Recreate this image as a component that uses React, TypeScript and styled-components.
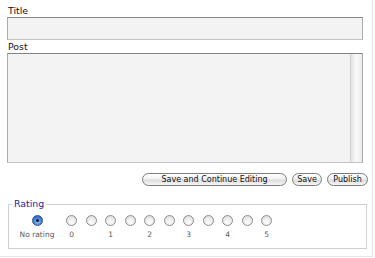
import { createGlobalStyle } from "styled-components";
import styled from "styled-components";

const GlobalStyle = createGlobalStyle`
  body {
    margin: 0;
    background: #ffffff;
    font-family: "DejaVu Sans", "Liberation Sans", sans-serif;
  }
`;

const Frame = styled.div`
  width: 373px;
  height: 257px;
  box-sizing: border-box;
  padding: 4px 4px 0 7px;
  border-right: 1px solid #e6e6e6;
  border-bottom: 1px solid #e6e6e6;
`;

const FieldLabel = styled.label`
  display: block;
  font-size: 9.4px;
  line-height: 13px;
  color: #111;
  padding-left: 1px;
`;

const TextInput = styled.input`
  display: block;
  width: 356px;
  height: 23px;
  margin: 0;
  box-sizing: border-box;
  border: 1px solid #ababab;
  border-top-color: #858585;
  border-bottom-color: #c4c4c4;
  background: #f3f3f3;
  outline: none;
`;

const PostBox = styled.div`
  display: flex;
  width: 356px;
  height: 110px;
  box-sizing: border-box;
  border: 1px solid #ababab;
  border-top-color: #858585;
  border-bottom-color: #c4c4c4;
  background: #f3f3f3;
`;

const PostArea = styled.textarea`
  flex: 1;
  border: 0;
  margin: 0;
  padding: 2px;
  background: transparent;
  resize: none;
  outline: none;
`;

const ScrollTrack = styled.div`
  width: 11px;
  border-left: 1px solid #d2d2d2;
  background: linear-gradient(to right, #e2e2e2, #f9f9f9 45%, #f2f2f2 80%, #e8e8e8);
`;

const Actions = styled.div`
  display: flex;
  justify-content: flex-end;
  gap: 5px;
  margin-top: 10px;
`;

const PillButton = styled.button<{ $width: number }>`
  width: ${({ $width }) => $width}px;
  height: 13px;
  padding: 0;
  box-sizing: border-box;
  border: 1px solid #7c7c7c;
  border-radius: 7px;
  background: linear-gradient(#ffffff, #f1f1f1 45%, #dcdcdc 55%, #f6f6f6);
  font-family: "DejaVu Sans", sans-serif;
  font-size: 8px;
  line-height: 11px;
  color: #111;
  cursor: pointer;
`;

const RatingSet = styled.fieldset`
  width: 359px;
  margin: 12px 0 0 1px;
  padding: 0 0 8px 3px;
  box-sizing: border-box;
  border: 1px solid #cfcfcf;
`;

const Legend = styled.legend`
  padding: 0 2px;
  font-size: 9.4px;
  line-height: 12px;
  color: #2323a3;
`;

const RatingRow = styled.div`
  display: flex;
  margin-top: 5px;
`;

const RatingCol = styled.label<{ $wide?: boolean }>`
  display: flex;
  flex-direction: column;
  align-items: center;
  gap: 4px;
  width: ${({ $wide }) => ($wide ? "50px" : "19.5px")};
`;

const Radio = styled.input.attrs({ type: "radio" })`
  appearance: none;
  width: 11px;
  height: 11px;
  margin: 0;
  box-sizing: border-box;
  border-radius: 50%;
  border: 1px solid #8d8d8d;
  background: radial-gradient(circle at 50% 70%, #ffffff, #e4e4e4 70%, #d2d2d2);
  position: relative;

  &:checked {
    border-color: #2d4f8c;
    background: radial-gradient(circle at 50% 65%, #9cc4f5, #3f7fd8 55%, #2357b3);
  }
  &:checked::after {
    content: "";
    position: absolute;
    left: 3px;
    top: 3px;
    width: 3px;
    height: 3px;
    border-radius: 50%;
    background: #101828;
  }
`;

const RatingText = styled.span`
  font-size: 7.5px;
  line-height: 10px;
  height: 10px;
  color: #5a5a5a;
  white-space: nowrap;
`;

const values = [0, 0.5, 1, 1.5, 2, 2.5, 3, 3.5, 4, 4.5, 5];

export default function App() {
  return (
    <>
      <GlobalStyle />
      <Frame>
        <FieldLabel htmlFor="title">Title</FieldLabel>
        <TextInput id="title" />
        <FieldLabel htmlFor="post">Post</FieldLabel>
        <PostBox>
          <PostArea id="post" />
          <ScrollTrack />
        </PostBox>

        <Actions>
          <PillButton $width={145}>Save and Continue Editing</PillButton>
          <PillButton $width={30}>Save</PillButton>
          <PillButton $width={41}>Publish</PillButton>
        </Actions>

        <RatingSet>
          <Legend>Rating</Legend>
          <RatingRow>
            <RatingCol $wide>
              <Radio name="rating" defaultChecked />
              <RatingText>No rating</RatingText>
            </RatingCol>
            {values.map((v) => (
              <RatingCol key={v}>
                <Radio name="rating" />
                <RatingText>{Number.isInteger(v) ? v : ""}</RatingText>
              </RatingCol>
            ))}
          </RatingRow>
        </RatingSet>
      </Frame>
    </>
  );
}
